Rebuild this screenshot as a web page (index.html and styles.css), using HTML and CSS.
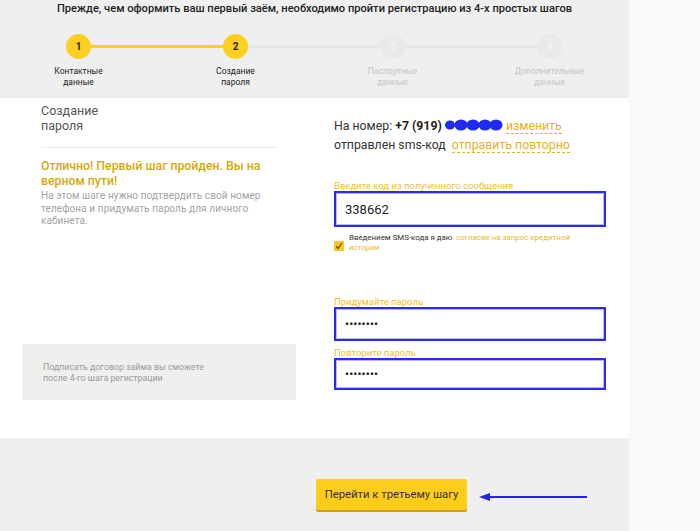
FILE: index.html
```html
<!DOCTYPE html>
<html lang="ru">
<head>
<meta charset="utf-8">
<title>Регистрация</title>
<link rel="stylesheet" href="styles.css">
</head>
<body>
<div class="page">
  <header class="header">
    <h1 class="title">Прежде, чем оформить ваш первый заём, необходимо пройти регистрацию из 4-х простых шагов</h1>
    <ol class="steps">
      <li class="step done"><span class="dot">1</span><span class="label">Контактные<br>данные</span></li>
      <li class="step active"><span class="dot">2</span><span class="label">Создание<br>пароля</span></li>
      <li class="step"><span class="dot">3</span><span class="label">Паспортные<br>данные</span></li>
      <li class="step last"><span class="dot">4</span><span class="label">Дополнительные<br>данные</span></li>
    </ol>
  </header>

  <main class="content">
    <section class="left">
      <h2 class="sub">Создание<br>пароля</h2>
      <hr class="divider">
      <p class="great">Отлично! Первый шаг пройден. Вы на верном пути!</p>
      <p class="hint">На этом шаге нужно подтвердить свой номер<br>телефона и придумать пароль для личного<br>кабинета.</p>
      <div class="note">Подписать договор займа вы сможете<br>после 4-го шага регистрации</div>
    </section>

    <section class="right">
      <p class="phone">На номер: <b>+7 (919)</b> <svg class="blob" width="58" height="12" viewBox="0 0 58 12"><g fill="#1f2bf0"><ellipse cx="5" cy="6" rx="5" ry="4.5"/><ellipse cx="16" cy="6" rx="6.5" ry="5.5"/><ellipse cx="28" cy="6" rx="6.5" ry="5.5"/><ellipse cx="40" cy="6" rx="6.5" ry="5.5"/><ellipse cx="51" cy="6" rx="6.5" ry="5.5"/></g></svg> <a class="dash">изменить</a></p>
      <p class="phone">отправлен sms-код&nbsp; <a class="dash">отправить повторно</a></p>

      <label class="flabel first">Введите код из полученного сообщения</label>
      <div class="field tall">338662</div>
      <div class="agree">
        <span class="check"><svg width="8" height="8" viewBox="0 0 8 8"><path d="M1 4.2 L3 6.5 L7 1" fill="none" stroke="#5a4300" stroke-width="1.1"/></svg></span>
        <span class="agree-text">Введением SMS-кода я даю&nbsp; <a class="ylink">согласие на запрос кредитной</a><br><a class="ylink">истории</a></span>
      </div>

      <label class="flabel second">Придумайте пароль</label>
      <div class="field pw">••••••••</div>
      <label class="flabel third">Повторите пароль</label>
      <div class="field pw short">••••••••</div>
    </section>
  </main>

  <footer class="footer">
    <button class="btn">Перейти к третьему шагу</button>
    <svg class="arrow" width="110" height="10" viewBox="0 0 110 10"><path d="M10 5 H108" stroke="#2323ee" stroke-width="2"/><path d="M0 5 L11 1 L11 9 Z" fill="#2323ee"/></svg>
  </footer>
</div>
</body>
</html>
```
FILE: styles.css
```css
* { box-sizing: border-box; }
html, body { margin: 0; padding: 0; }
body {
  background: #f9f9f8;
  font-family: Roboto, "Liberation Sans", Arial, sans-serif;
  color: #333;
  width: 700px;
  height: 531px;
  overflow: hidden;
}
.page { width: 629px; }

.header {
  background: #efefef;
  height: 98px;
  padding-top: 1px;
  border-bottom: 1px solid #e9e9e9;
}
.title {
  margin: 0;
  text-align: center;
  font-size: 11.1px;
  font-weight: 500;
  color: #222;
  line-height: 16px;
}
.steps {
  list-style: none;
  margin: 17px 0 0;
  padding: 0;
  display: grid;
  grid-template-columns: repeat(4, 157px);
}
.step {
  position: relative;
  display: flex;
  flex-direction: column;
  align-items: center;
}
.step::after {
  content: "";
  position: absolute;
  left: 78px;
  top: 11px;
  width: 157px;
  height: 3px;
  background: #e6e6e6;
  z-index: 0;
}
.step.done::after { background: #fdcf21; }
.step.last::after { display: none; }
.dot {
  position: relative;
  z-index: 1;
  width: 25px;
  height: 25px;
  border-radius: 50%;
  background: #e9e9e9;
  color: #f4f4f4;
  font-size: 10px;
  font-weight: 700;
  display: flex;
  align-items: center;
  justify-content: center;
}
.done .dot, .active .dot { background: #fdcf21; color: #222; }
.label {
  margin-top: 7px;
  font-size: 8.5px;
  line-height: 10.5px;
  text-align: center;
  color: #c4c4c4;
}
.done .label, .active .label { color: #222; }

.content {
  background: #fff;
  height: 340px;
  display: flex;
}
.left {
  width: 300px;
  padding: 5px 0 0 22px;
  display: flex;
  flex-direction: column;
}
.sub {
  margin: 0 0 0 19px;
  font-size: 12.5px;
  font-weight: 400;
  line-height: 15px;
  color: #555;
}
.divider {
  margin: 14px 0 0 19px;
  width: 236px;
  border: 0;
  border-top: 1px solid #ececec;
}
.great {
  margin: 11px 0 0 19px;
  font-size: 12.3px;
  font-weight: 500;
  line-height: 15px;
  color: #d6a90b;
  width: 240px;
}
.hint {
  margin: 1px 0 0 19px;
  font-size: 10px;
  letter-spacing: 0.1px;
  line-height: 12.5px;
  color: #a3a3a3;
  white-space: nowrap;
}
.note {
  margin-top: 116px;
  width: 274px;
  height: 56px;
  background: #efefee;
  padding: 18px 0 0 21px;
  font-size: 8.8px;
  line-height: 11px;
  color: #9a9a9a;
}

.right {
  padding: 19px 0 0 34px;
  width: 306px;
}
.phone {
  margin: 0;
  font-size: 12.3px;
  line-height: 19px;
  color: #333;
  white-space: nowrap;
}
.phone b { font-weight: 700; color: #222; }
.blob { vertical-align: -1px; }
.dash {
  color: #e4b21c;
  border-bottom: 1px dashed #e4b21c;
}
.flabel {
  display: block;
  font-size: 9.5px;
  line-height: 11px;
  color: #f0c02c;
}
.flabel.first { margin-top: 25px; }
.flabel.second { margin-top: 43px; }
.flabel.third { margin-top: 6px; }
.field {
  width: 272px;
  height: 34px;
  border: 2px solid #2a2af2;
  box-shadow: inset 0 0 0 1px #b9b9f8;
  padding-left: 9px;
  display: flex;
  align-items: center;
  font-size: 13px;
  color: #222;
}
.field.tall { height: 36px; }
.field.pw { font-size: 11px; letter-spacing: 0.2px; font-weight: 700; }
.field.short { height: 32px; }
.agree {
  display: flex;
  align-items: flex-start;
  margin-top: 6px;
}
.check {
  margin-top: 8px;
  width: 10px;
  height: 10px;
  flex: none;
  background: #f7c630;
  display: flex;
  align-items: center;
  justify-content: center;
}
.agree-text {
  margin-left: 5px;
  font-size: 7.9px;
  line-height: 10px;
  color: #333;
  width: 240px;
  white-space: nowrap;
}
.ylink { color: #e8b928; }

.footer {
  background: #efefee;
  height: 93px;
  display: flex;
  align-items: flex-start;
  padding: 41px 0 0 316px;
}
.btn {
  width: 151px;
  height: 31px;
  border: 0;
  border-radius: 2px;
  background: #fecd1a;
  box-shadow: 0 2px 0 #c9a214;
  font-family: Roboto, "Liberation Sans", Arial, sans-serif;
  font-size: 11.3px;
  color: #333;
  padding: 0;
}
.arrow { margin: 13px 0 0 12px; }
```
